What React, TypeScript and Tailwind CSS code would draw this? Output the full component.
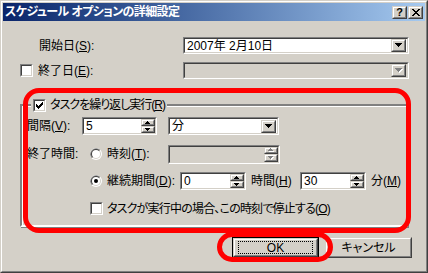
import React from 'react';

type Box = { children?: React.ReactNode; className?: string; disabled?: boolean };

// classic 3D borders
const Sunken = ({ children, className = '', disabled = false }: Box) => (
  <div className={`border border-t-[#808080] border-l-[#808080] border-r-white border-b-white ${className}`}>
    <div
      className={`flex h-full w-full items-center border border-t-[#404040] border-l-[#404040] border-r-[#D4D0C8] border-b-[#D4D0C8] ${
        disabled ? 'bg-[#D4D0C8]' : 'bg-white'
      }`}
    >
      {children}
    </div>
  </div>
);

const Raised = ({ children, className = '' }: Box) => (
  <div className={`border border-t-[#D4D0C8] border-l-[#D4D0C8] border-r-[#404040] border-b-[#404040] bg-[#D4D0C8] ${className}`}>
    <div className="flex h-full w-full items-center justify-center border border-t-white border-l-white border-r-[#808080] border-b-[#808080]">
      {children}
    </div>
  </div>
);

const DropArrow = ({ disabled }: { disabled?: boolean }) => (
  <svg width="8" height="5" viewBox="0 0 8 5">
    {disabled && <path d="M1 1h7v1H1zM2 2h5v1H2zM3 3h3v1H3zM4 4h1v1H4z" fill="#fff" />}
    <path d="M0 0h7v1H0zM1 1h5v1H1zM2 2h3v1H2zM3 3h1v1H3z" fill={disabled ? '#808080' : '#000'} />
  </svg>
);

const SpinArrow = ({ up, disabled }: { up?: boolean; disabled?: boolean }) => (
  <svg width="6" height="4" viewBox="0 0 6 4">
    {disabled && (
      <path d={up ? 'M3 1h1v1H3zM2 2h3v1H2zM1 3h5v1H1z' : 'M1 1h5v1H1zM2 2h3v1H2zM3 3h1v1H3z'} fill="#fff" />
    )}
    <path
      d={up ? 'M2 0h1v1H2zM1 1h3v1H1zM0 2h5v1H0z' : 'M0 0h5v1H0zM1 1h3v1H1zM2 2h1v1H2z'}
      fill={disabled ? '#808080' : '#000'}
    />
  </svg>
);

const Combo = ({ value, className = '', disabled }: { value?: string; className?: string; disabled?: boolean }) => (
  <Sunken className={className} disabled={disabled}>
    <span className="flex-1 truncate pl-[2px]">{value}</span>
    <Raised className="mr-[1px] h-[13px] w-[15px]">
      <DropArrow disabled={disabled} />
    </Raised>
  </Sunken>
);

const SpinBox = ({ value, className = '', disabled }: { value?: string; className?: string; disabled?: boolean }) => (
  <Sunken className={className} disabled={disabled}>
    <span className="flex-1 pl-[2px]">{value}</span>
    <div className="flex h-full w-[14px] flex-col">
      <Raised className="h-1/2">
        <SpinArrow up disabled={disabled} />
      </Raised>
      <Raised className="h-1/2">
        <SpinArrow disabled={disabled} />
      </Raised>
    </div>
  </Sunken>
);

const CheckBox = ({ checked }: { checked?: boolean }) => (
  <Sunken className="h-[13px] w-[13px] shrink-0">
    {checked && (
      <svg width="9" height="9" viewBox="0 0 9 9">
        <path
          transform="translate(1 1)"
          d="M6 0h1v1H6zM5 1h2v1H5zM0 2h1v1H0zM4 2h3v1H4zM0 3h2v1H0zM3 3h3v1H3zM0 4h5v1H0zM1 5h3v1H1zM2 6h1v1H2z"
          fill="#000"
        />
      </svg>
    )}
  </Sunken>
);

const Radio = ({ checked }: { checked?: boolean }) => (
  <svg width="12" height="12" viewBox="0 0 12 12" className="shrink-0">
    <circle cx="6" cy="6" r="6" fill="#fff" />
    <path d="M10.24 1.76A6 6 0 0 0 1.76 10.24Z" fill="#808080" />
    <circle cx="6" cy="6" r="5" fill="#D4D0C8" />
    <path d="M9.54 2.46A5 5 0 0 0 2.46 9.54Z" fill="#404040" />
    <circle cx="6" cy="6" r="4" fill="#fff" />
    {checked && <circle cx="6" cy="6" r="2" fill="#000" />}
  </svg>
);

const TitleButton = ({ children }: { children: React.ReactNode }) => (
  <Raised className="h-[13px] w-[15px] text-[11px] leading-none font-bold">{children}</Raised>
);

export default function App() {
  return (
    <div className="relative h-[273px] w-[428px] overflow-hidden border border-t-[#D4D0C8] border-l-[#D4D0C8] border-r-[#404040] border-b-[#404040] bg-[#D4D0C8] font-['Liberation_Sans','Noto_Sans_CJK_JP',sans-serif] text-[12px] leading-[14px] text-black [font-feature-settings:'palt']">
      <div className="flex h-full w-full flex-col border border-t-white border-l-white border-r-[#808080] border-b-[#808080] p-[1px]">
        {/* title bar */}
        <div className="flex h-[18px] shrink-0 items-center bg-gradient-to-r from-[#0A246A] to-[#A6CAF0] pl-[2px] pr-[2px]">
          <span className="flex-1 font-bold tracking-[-0.6px] text-white">スケジュール オプションの詳細設定</span>
          <div className="flex gap-[1px]">
            <TitleButton>?</TitleButton>
            <TitleButton>
              <svg width="8" height="7" viewBox="0 0 8 7">
                <path d="M0 0h2v1H0zM6 0h2v1H6zM1 1h2v1H1zM5 1h2v1H5zM2 2h4v1H2zM3 3h2v1H3zM2 4h4v1H2zM1 5h2v1H1zM5 5h2v1H5zM0 6h2v1H0zM6 6h2v1H6z" fill="#000" />
              </svg>
            </TitleButton>
          </div>
        </div>

        {/* start date */}
        <div className="mt-[16px] flex h-[17px] items-center pl-[36px]">
          <span className="w-[144px]">
            開始日(<u>S</u>):
          </span>
          <Combo value="2007年 2月10日" className="h-[17px] w-[226px]" />
        </div>

        {/* end date */}
        <div className="mt-[8px] flex h-[17px] items-center pl-[17px]">
          <CheckBox />
          <span className="ml-[5px] w-[145px]">
            終了日(<u>E</u>):
          </span>
          <Combo className="h-[17px] w-[226px]" disabled />
        </div>

        {/* repeat group */}
        <fieldset className="ml-[17px] mt-[19px] w-[388px] border-2 border-t-[#808080] border-l-[#808080] border-r-white border-b-white pb-[10px] pl-[5px] shadow-[inset_1px_1px_0_#fff,1px_1px_0_#808080]">
          <legend className="ml-[4px] flex h-[14px] items-center bg-[#D4D0C8] px-[2px]">
            <CheckBox checked />
            <span className="ml-[4px] tracking-[-1px]">
              タスクを繰り返し実行(<u>R</u>)
            </span>
          </legend>

          <div className="mt-[5px] flex h-[18px] items-center">
            <span className="w-[55px]">
              間隔(<u>V</u>):
            </span>
            <SpinBox value="5" className="h-[18px] w-[75px]" />
            <Combo value="分" className="ml-[11px] h-[18px] w-[111px]" />
          </div>

          <div className="mt-[10px] flex h-[18px] items-center">
            <span className="w-[63px]">終了時間:</span>
            <div className="flex w-[78px] items-center">
              <Radio />
              <span className="ml-[5px]">
                時刻(<u>T</u>):
              </span>
            </div>
            <SpinBox className="h-[19px] w-[112px]" disabled />
          </div>

          <div className="mt-[9px] flex h-[18px] items-center pl-[63px]">
            <div className="flex w-[90px] items-center">
              <Radio checked />
              <span className="ml-[5px]">
                継続期間(<u>D</u>):
              </span>
            </div>
            <SpinBox value="0" className="h-[18px] w-[66px]" />
            <span className="ml-[5px] w-[49px]">
              時間(<u>H</u>)
            </span>
            <SpinBox value="30" className="h-[18px] w-[66px]" />
            <span className="ml-[5px]">
              分(<u>M</u>)
            </span>
          </div>

          <div className="mt-[12px] flex h-[13px] items-center pl-[63px]">
            <CheckBox />
            <span className="ml-[4px] tracking-[-0.8px]">
              タスクが実行中の場合、この時刻で停止する(<u>O</u>)
            </span>
          </div>
        </fieldset>

        {/* buttons */}
        <div className="mt-[10px] flex justify-end gap-[6px] pr-[13px]">
          <div className="h-[21px] w-[87px] border border-black">
            <Raised className="h-full w-full">
              <span className="flex h-[13px] w-[75px] items-center justify-center border border-dotted border-black">OK</span>
            </Raised>
          </div>
          <Raised className="h-[21px] w-[87px]">キャンセル</Raised>
        </div>
      </div>

      {/* red annotations */}
      <div className="pointer-events-none absolute left-[22px] top-[87px] h-[145px] w-[388px] rounded-[16px] border-[5px] border-[#FF0000]" />
      <div className="pointer-events-none absolute left-[216px] top-[231px] h-[30px] w-[116px] rounded-[15px] border-[5px] border-[#FF0000]" />
    </div>
  );
}
